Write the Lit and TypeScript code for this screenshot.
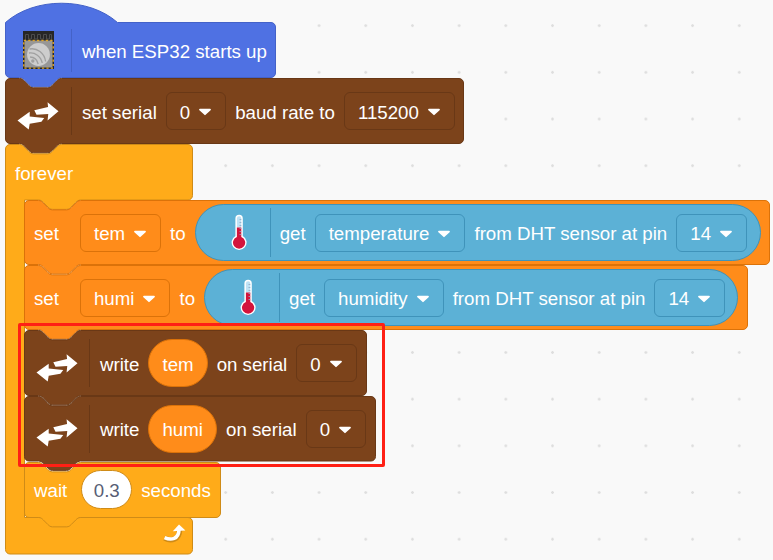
import { LitElement, html, css, svg } from "lit";
import { customElement } from "lit/decorators.js";

const N = "c 2.3,0 3.5,1.2 4.68,2.34 l 4.68,4.68 c 1.2,1.2 2.3,2.34 4.68,2.34 h 14 c 2.3,0 3.5,-1.2 4.68,-2.34 l 4.68,-4.68 c 1.2,-1.2 2.3,-2.34 4.68,-2.34";
const T = "c -2.3,0 -3.5,1.2 -4.68,2.34 l -4.68,4.68 c -1.2,1.2 -2.3,2.34 -4.68,2.34 h -14 c -2.3,0 -3.5,-1.2 -4.68,-2.34 l -4.68,-4.68 c -1.2,-1.2 -2.3,-2.34 -4.68,-2.34";
const R = 4.5;
const a = (dx: number, dy: number) => `a ${R},${R} 0 0 1 ${dx},${dy}`;

function topEdge(w: number, hat: boolean) {
  if (hat) return `M 0.5,0.5 c 29,-25.7 83,-25.7 112,0 H ${w - 0.5 - R}`;
  return `M 0.5,${0.5 + R} ${a(R, -R)} H 14.5 ${N} H ${w - 0.5 - R}`;
}
function blockPath(w: number, h: number, hat = false) {
  return `${topEdge(w, hat)} ${a(R, R)} V ${h - 0.5 - R} ${a(-R, R)} H 56.6 ${T} H ${0.5 + R} ${a(-R, -R)} Z`;
}
function cPath(w: number, h: number, head: number, footH: number) {
  const arm = 19.5;
  return `${topEdge(w, false)} ${a(R, R)} V ${head - R} ${a(-R, R)} H ${arm + 56.1} ${T} H ${arm} V ${h - footH} H ${w - 0.5 - R} ${a(R, R)} V ${h - 0.5 - R} ${a(-R, R)} H ${0.5 + R} ${a(-R, -R)} Z`;
}

const caret = html`<svg class="caret" width="14" height="8" viewBox="0 0 14 8"><path d="M2 1.6 H12 L7 6.2 Z" fill="#fff" stroke="#fff" stroke-width="1.8" stroke-linejoin="round"/></svg>`;

const arrows = html`<svg class="icon-arrows" width="42" height="29" viewBox="17 102 43 29"><path fill="#fff" d="M59.5 111 L48.3 102 L48.8 106.8 L34.7 110 L37 114.6 L49 114 L48.3 120.5 Z M17.5 120.5 L30 111.7 L30 116.6 L44.9 118 L42 122 L30 124 L29 129.8 Z"/></svg>`;

const thermo = html`<svg class="thermo" width="16" height="37" viewBox="229 214.5 16 37">
  <path d="M233.4 219 a3.7 3.7 0 0 1 7.4 0 V236.4 a7.5 7.5 0 1 1 -7.4 0 Z" fill="#fff"/>
  <path d="M234.9 219 a2.2 2.2 0 0 1 4.4 0 V228 H234.9 Z" fill="#bfe2f5"/>
  <path d="M234.9 228 H239.3 V237.4 a6.1 6.1 0 1 1 -4.4 0 Z" fill="#d3143c"/>
  <path d="M239.3 220 h-1.8 M239.3 223 h-1.8 M239.3 226 h-1.8 M239.3 229 h-1.8 M239.3 232 h-1.8 M239.3 235 h-1.8" stroke="#8fa9c4" stroke-width=".8"/>
</svg>`;

const esp = html`<svg class="esp" width="31" height="38" viewBox="24 32 31 38">
  <rect x="24" y="32" width="31" height="38" fill="#262626"/>
  <path d="M26.5 41 V35.5 H29.5 V40 H32.5 V35.5 H35.5 V40 H38.5 V35.5 H41.5 V40 H44.5 V35.5 H47.5 V40 H50.5 V35.5 H52.5 V41" fill="none" stroke="#4c4c4c" stroke-width="1"/>
  <rect x="25.5" y="41.5" width="28" height="27" fill="#979797"/>
  <rect x="24.8" y="41.5" width="29.4" height="27.6" fill="none" stroke="#e0a526" stroke-width="1.4" stroke-dasharray="2.2 2.2"/>
  <circle cx="39.5" cy="55.5" r="11.4" fill="#cdcdcd"/>
  <g fill="none" stroke="#a0a0a0" stroke-width="1.3">
    <path d="M30.5 50 C38 48.5 45.5 54 46.6 62.5"/>
    <path d="M30 54 C36 53 42 57.5 43.2 64"/>
    <path d="M31 58 C34.5 58 38 60 39.2 65"/>
  </g>
  <circle cx="33.8" cy="62" r="1.7" fill="#a0a0a0"/>
</svg>`;

const loop = html`<svg class="loop" width="24" height="22" viewBox="159 526 24 22"><path d="M161.6 541.2 C168 544.5 176.4 543 176.6 533" fill="none" stroke="#cf8b17" stroke-width="5.4"/><path d="M161.6 540.6 C168 543.5 175.8 542.5 176 532.4" fill="none" stroke="#fff" stroke-width="3.6"/><path d="M176 527.4 L182.4 533.6 L169.8 534.2 Z" fill="#fff"/></svg>`;

@customElement("app-root")
export class AppRoot extends LitElement {
  static styles = css`
    :host {
      display: block;
      position: relative;
      width: 773px;
      height: 560px;
      overflow: hidden;
      background-color: #f9f9f9;
      background-image: radial-gradient(circle at center, #dedede 0, #dedede 1px, transparent 1.6px);
      background-size: 46.7px 46.7px;
      background-position: 15.6px 2.3px;
      font-family: "Liberation Sans", Arial, sans-serif;
      font-size: 18.7px;
      color: #fff;
    }
    span { padding-top: 3px; }
    .canvas { display: flex; flex-direction: column; align-items: flex-start; padding: 22px 0 0 5px; }
    .block { position: relative; display: flex; align-items: center; flex: none; box-sizing: border-box; padding-left: 10px; gap: 9px; white-space: nowrap; }
    .block > *:not(.shape) { position: relative; }
    .shape { position: absolute; left: 0; top: 0; overflow: visible; }
    .shape path { fill: var(--fill); stroke: var(--edge); stroke-width: 1; }
    .blue { --fill: #4f71e3; --edge: #4462c8; }
    .brown { --fill: #7c431b; --edge: #693816; }
    .orange { --fill: #ff8c1a; --edge: #db7209; }
    .amber { --fill: #ffab19; --edge: #cf8b17; }
    .sensor { --fill: #5cb1d6; --edge: #3f93ba; }
    .dd { display: flex; align-items: center; justify-content: center; gap: 8px; box-sizing: border-box; height: 38px; padding: 0 13px; background: var(--fill); border: 1px solid var(--edge); border-radius: 6px; flex: none; }
    .caret { flex: none; margin-top: 2px; }
    .cell { width: 66px; margin-left: -10px; margin-right: -9px; display: flex; align-items: center; justify-content: center; flex: none; }
    .cell.low { padding-top: 10px; box-sizing: content-box; }
    .cell.tight { width: 65px; }
    .sep { width: 1px; background: var(--edge); flex: none; margin-right: 1px; }
    .sep.s43 { height: 43px; }
    .sep.s48 { height: 48px; }
    .sep.s49 { height: 49px; margin-right: 0; }
    .setlabel { margin-right: 12px; }
    .waitlabel { margin-right: 5px; }
    .reporter { display: flex; align-items: center; flex: none; box-sizing: border-box; height: 57px; border-radius: 28.5px; background: var(--fill); border: 1px solid var(--edge); gap: 9px; padding-right: 13px; }
    .r-cell { width: 74px; flex: none; box-sizing: border-box; padding-left: 35px; margin-right: -9px; display: flex; }
    .var { display: flex; align-items: center; justify-content: center; flex: none; box-sizing: border-box; height: 48px; border-radius: 24px; padding: 3px 13px 0; background: #ff8c1a; border: 1px solid #db7209; }
    .num { display: flex; align-items: center; justify-content: center; flex: none; box-sizing: border-box; height: 39px; border-radius: 19.5px; padding: 3px 11.5px 0; background: #fff; border: 1px solid #cf8b17; color: #575e75; }
    .cblock { position: relative; flex: none; display: flex; flex-direction: column; }
    .chead { height: 56px; display: flex; align-items: center; padding-left: 10px; position: relative; box-sizing: border-box; }
    .cbody { position: relative; display: flex; flex-direction: column; align-items: flex-start; padding-left: 19px; }
    .cfoot { height: 37px; position: relative; box-sizing: border-box; display: flex; justify-content: flex-end; align-items: center; width: 188px; padding-right: 7px; padding-bottom: 5px; }
    .frame { position: absolute; left: 18px; top: 323px; width: 367px; height: 144px; box-sizing: border-box; border: 3px solid #ff2015; border-radius: 2px; pointer-events: none; }
  `;

  private bg(w: number, h: number, d: string) {
    return html`<svg class="shape" width=${w} height=${h}>${svg`<path d=${d}></path>`}</svg>`;
  }
  private block(theme: string, w: number, h: number, content: unknown, hat = false) {
    return html`<div class="block ${theme}" style="width:${w}px;height:${h}px">${this.bg(w, h, blockPath(w, h, hat))}${content}</div>`;
  }
  private dd(text: string) {
    return html`<div class="dd"><span>${text}</span>${caret}</div>`;
  }
  private serialCell(tight = false) {
    return html`<div class="cell low ${tight ? "tight" : ""}">${arrows}</div><div class="sep s48"></div>`;
  }
  private reading(which: string, width: number) {
    return html`<div class="reporter sensor" style="width:${width}px">
      <div class="r-cell">${thermo}</div>
      <div class="sep s49"></div>
      <span>get</span>${this.dd(which)}<span>from DHT sensor at pin</span>${this.dd("14")}
    </div>`;
  }
  private setRow(name: string, sensor: string, w: number, h: number, rw: number) {
    return this.block("orange", w, h, html`<span class="setlabel">set</span>${this.dd(name)}<span>to</span>${this.reading(sensor, rw)}`);
  }
  private writeRow(name: string, w: number, h: number) {
    return this.block("brown", w, h, html`${this.serialCell(true)}<span>write</span><div class="var">${name}</div><span>on serial</span>${this.dd("0")}`);
  }

  render() {
    const fw = 188, fh = 410.5;
    return html`
      <div class="canvas">
        ${this.block("blue", 271, 56, html`<div class="cell">${esp}</div><div class="sep s43"></div><span>when ESP32 starts up</span>`, true)}
        ${this.block("brown", 459, 66, html`${this.serialCell()}<span>set serial</span>${this.dd("0")}<span>baud rate to</span>${this.dd("115200")}`)}
        <div class="cblock amber" style="width:${fw}px;height:${fh}px">
          ${this.bg(fw, fh, cPath(fw, fh, 56, 37))}
          <div class="chead"><span>forever</span></div>
          <div class="cbody">
            ${this.setRow("tem", "temperature", 746, 65, 566)}
            ${this.setRow("humi", "humidity", 724, 65, 534)}
            ${this.writeRow("tem", 343, 66)}
            ${this.writeRow("humi", 352, 65.5)}
            ${this.block("amber", 197, 56, html`<span class="waitlabel">wait</span><div class="num">0.3</div><span>seconds</span>`)}
          </div>
          <div class="cfoot">${loop}</div>
        </div>
      </div>
      <div class="frame"></div>
    `;
  }
}
